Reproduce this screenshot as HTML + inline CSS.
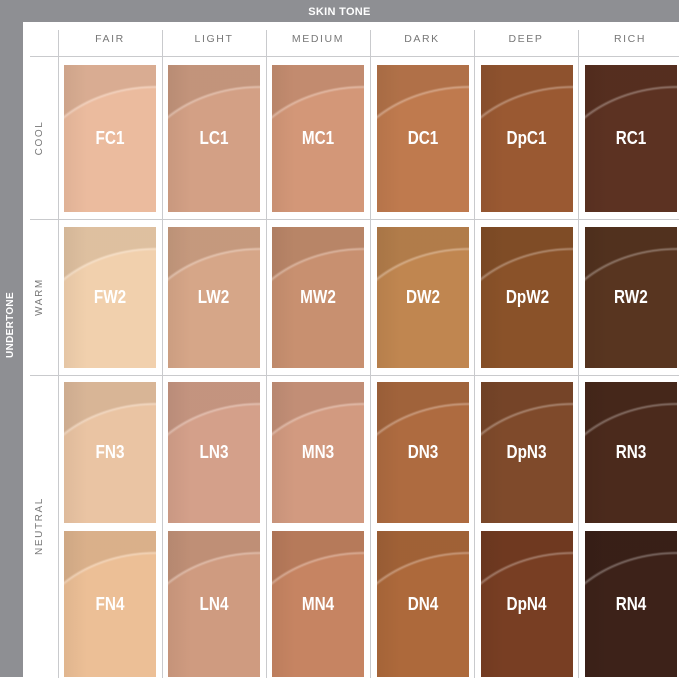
<!DOCTYPE html><html><head><style>
body{margin:0;width:679px;height:679px;background:#fff;position:relative;overflow:hidden;font-family:"Liberation Sans",sans-serif}
.a{position:absolute}
.top{left:0;top:0;width:679px;height:22px;background:#8e8f93;color:#fff;font-weight:bold;font-size:11px;text-align:center;line-height:24px;letter-spacing:.3px}
.left{left:0;top:0;width:23px;height:677px;background:#8e8f93}
.ut{left:-30px;top:318px;width:84px;height:14px;color:#fff;font-weight:bold;font-size:10px;text-align:center;transform:rotate(-90deg);letter-spacing:.3px}
.vl{width:1px;background:#c9cacd;top:30px;height:648px}
.hl{height:1px;background:#c9cacd;left:30px;width:649px}
.ch{top:33px;height:14px;font-size:10.5px;color:#777;letter-spacing:1.6px;text-align:center;width:104px}
.rl{font-size:10px;color:#777;letter-spacing:1.6px;transform:rotate(-90deg);width:90px;text-align:center;height:12px}
.s{width:92px;color:#fff;font-weight:bold;font-size:18px;display:flex;align-items:center;justify-content:center;overflow:hidden}
.s:before{content:"";position:absolute;left:0;top:0;right:0;bottom:0;background:radial-gradient(ellipse 130px 100px at 100% 120px,rgba(0,0,0,0) 96%,rgba(255,255,255,.3) 98%,rgba(0,0,0,.08) 100%),linear-gradient(90deg,rgba(0,0,0,.05),rgba(0,0,0,0) 25%)}
.s span{position:relative;transform:scaleX(.85);display:block}
</style></head><body>
<div class="a left"></div>
<div class="a top">SKIN TONE</div>
<div class="a ut">UNDERTONE</div>
<div class="a vl" style="left:58px;top:30px"></div>
<div class="a vl" style="left:162px"></div>
<div class="a vl" style="left:266px"></div>
<div class="a vl" style="left:370px"></div>
<div class="a vl" style="left:474px"></div>
<div class="a vl" style="left:578px"></div>
<div class="a hl" style="top:56px"></div>
<div class="a hl" style="top:219px"></div>
<div class="a hl" style="top:375px"></div>
<div class="a ch" style="left:58px">FAIR</div>
<div class="a ch" style="left:162px">LIGHT</div>
<div class="a ch" style="left:266px">MEDIUM</div>
<div class="a ch" style="left:370px">DARK</div>
<div class="a ch" style="left:474px">DEEP</div>
<div class="a ch" style="left:578px">RICH</div>
<div class="a rl" style="left:-5px;top:132px">COOL</div>
<div class="a rl" style="left:-5px;top:291px">WARM</div>
<div class="a rl" style="left:-5px;top:520px">NEUTRAL</div>

<div class="a s" style="left:64px;top:65px;height:147px;background:#ebbb9e"><span>FC1</span></div>
<div class="a s" style="left:168px;top:65px;height:147px;background:#d3a085"><span>LC1</span></div>
<div class="a s" style="left:272px;top:65px;height:147px;background:#d39778"><span>MC1</span></div>
<div class="a s" style="left:377px;top:65px;height:147px;background:#bf7a4e"><span>DC1</span></div>
<div class="a s" style="left:481px;top:65px;height:147px;background:#9a5932"><span>DpC1</span></div>
<div class="a s" style="left:585px;top:65px;height:147px;background:#5c3222"><span>RC1</span></div>

<div class="a s" style="left:64px;top:227px;height:141px;background:#f1d0ad"><span>FW2</span></div>
<div class="a s" style="left:168px;top:227px;height:141px;background:#d6a688"><span>LW2</span></div>
<div class="a s" style="left:272px;top:227px;height:141px;background:#c89070"><span>MW2</span></div>
<div class="a s" style="left:377px;top:227px;height:141px;background:#c08650"><span>DW2</span></div>
<div class="a s" style="left:481px;top:227px;height:141px;background:#8a5229"><span>DpW2</span></div>
<div class="a s" style="left:585px;top:227px;height:141px;background:#583520"><span>RW2</span></div>

<div class="a s" style="left:64px;top:382px;height:141px;background:#eac4a3"><span>FN3</span></div>
<div class="a s" style="left:168px;top:382px;height:141px;background:#d4a08a"><span>LN3</span></div>
<div class="a s" style="left:272px;top:382px;height:141px;background:#d29a80"><span>MN3</span></div>
<div class="a s" style="left:377px;top:382px;height:141px;background:#ae6b40"><span>DN3</span></div>
<div class="a s" style="left:481px;top:382px;height:141px;background:#7f4a2b"><span>DpN3</span></div>
<div class="a s" style="left:585px;top:382px;height:141px;background:#4b2a1c"><span>RN3</span></div>

<div class="a s" style="left:64px;top:531px;height:146px;background:#ecbf96"><span>FN4</span></div>
<div class="a s" style="left:168px;top:531px;height:146px;background:#cf9b80"><span>LN4</span></div>
<div class="a s" style="left:272px;top:531px;height:146px;background:#c68462"><span>MN4</span></div>
<div class="a s" style="left:377px;top:531px;height:146px;background:#ad693b"><span>DN4</span></div>
<div class="a s" style="left:481px;top:531px;height:146px;background:#783e23"><span>DpN4</span></div>
<div class="a s" style="left:585px;top:531px;height:146px;background:#3d2219"><span>RN4</span></div>
</body></html>
